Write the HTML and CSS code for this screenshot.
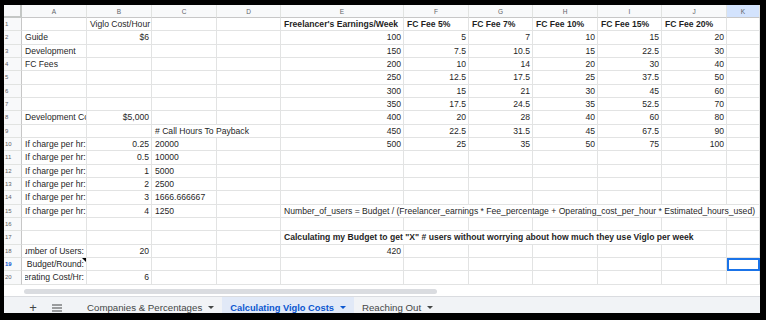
FILE: index.html
```html
<!DOCTYPE html>
<html>
<head>
    <meta charset="utf-8">
    <link rel="stylesheet" href="styles.css">
    <title>Calculating Viglo Costs</title>
</head>
<body>
<div class="frame">
    <table class="grid">
        <colgroup>
            <col style="width:18px">
            <col style="width:65px">
            <col style="width:65px">
            <col style="width:65px">
            <col style="width:64px">
            <col style="width:123px">
            <col style="width:65px">
            <col style="width:64px">
            <col style="width:65px">
            <col style="width:64px">
            <col style="width:65px">
            <col style="width:33px">
        </colgroup>
        <thead>
            <tr>
                <th class="corner"></th>
                <th>A</th><th>B</th><th>C</th><th>D</th><th>E</th><th>F</th>
                <th>G</th><th>H</th><th>I</th><th>J</th><th class="hl">K</th>
            </tr>
        </thead>
        <tbody>
            <tr>
                <th class="rh">1</th>
                <td></td><td>Viglo Cost/Hour</td><td></td><td></td>
                <td class="b">Freelancer's Earnings/Week</td>
                <td class="b">FC Fee 5%</td><td class="b">FC Fee 7%</td><td class="b">FC Fee 10%</td>
                <td class="b">FC Fee 15%</td><td class="b">FC Fee 20%</td><td></td>
            </tr>
            <tr>
                <th class="rh">2</th>
                <td>Guide</td><td class="n">$6</td><td></td><td></td>
                <td class="n">100</td><td class="n">5</td><td class="n">7</td><td class="n">10</td><td class="n">15</td><td class="n">20</td><td></td>
            </tr>
            <tr>
                <th class="rh">3</th>
                <td>Development</td><td></td><td></td><td></td>
                <td class="n">150</td><td class="n">7.5</td><td class="n">10.5</td><td class="n">15</td><td class="n">22.5</td><td class="n">30</td><td></td>
            </tr>
            <tr>
                <th class="rh">4</th>
                <td>FC Fees</td><td></td><td></td><td></td>
                <td class="n">200</td><td class="n">10</td><td class="n">14</td><td class="n">20</td><td class="n">30</td><td class="n">40</td><td></td>
            </tr>
            <tr>
                <th class="rh">5</th>
                <td></td><td></td><td></td><td></td>
                <td class="n">250</td><td class="n">12.5</td><td class="n">17.5</td><td class="n">25</td><td class="n">37.5</td><td class="n">50</td><td></td>
            </tr>
            <tr>
                <th class="rh">6</th>
                <td></td><td></td><td></td><td></td>
                <td class="n">300</td><td class="n">15</td><td class="n">21</td><td class="n">30</td><td class="n">45</td><td class="n">60</td><td></td>
            </tr>
            <tr>
                <th class="rh">7</th>
                <td></td><td></td><td></td><td></td>
                <td class="n">350</td><td class="n">17.5</td><td class="n">24.5</td><td class="n">35</td><td class="n">52.5</td><td class="n">70</td><td></td>
            </tr>
            <tr>
                <th class="rh">8</th>
                <td>Development Cost</td><td class="n">$5,000</td><td></td><td></td>
                <td class="n">400</td><td class="n">20</td><td class="n">28</td><td class="n">40</td><td class="n">60</td><td class="n">80</td><td></td>
            </tr>
            <tr>
                <th class="rh">9</th>
                <td></td><td></td><td colspan="2"># Call Hours To Payback</td>
                <td class="n">450</td><td class="n">22.5</td><td class="n">31.5</td><td class="n">45</td><td class="n">67.5</td><td class="n">90</td><td></td>
            </tr>
            <tr>
                <th class="rh">10</th>
                <td>If charge per hr:</td><td class="n">0.25</td><td>20000</td><td></td>
                <td class="n">500</td><td class="n">25</td><td class="n">35</td><td class="n">50</td><td class="n">75</td><td class="n">100</td><td></td>
            </tr>
            <tr>
                <th class="rh">11</th>
                <td>If charge per hr:</td><td class="n">0.5</td><td>10000</td><td></td>
                <td></td><td></td><td></td><td></td><td></td><td></td><td></td>
            </tr>
            <tr>
                <th class="rh">12</th>
                <td>If charge per hr:</td><td class="n">1</td><td>5000</td><td></td>
                <td></td><td></td><td></td><td></td><td></td><td></td><td></td>
            </tr>
            <tr>
                <th class="rh">13</th>
                <td>If charge per hr:</td><td class="n">2</td><td>2500</td><td></td>
                <td></td><td></td><td></td><td></td><td></td><td></td><td></td>
            </tr>
            <tr>
                <th class="rh">14</th>
                <td>If charge per hr:</td><td class="n">3</td><td>1666.666667</td><td></td>
                <td></td><td></td><td></td><td></td><td></td><td></td><td></td>
            </tr>
            <tr>
                <th class="rh">15</th>
                <td>If charge per hr:</td><td class="n">4</td><td>1250</td><td></td>
                <td colspan="7">Number_of_users = Budget / (Freelancer_earnings * Fee_percentage + Operating_cost_per_hour * Estimated_hours_used)</td>
            </tr>
            <tr>
                <th class="rh">16</th>
                <td></td><td></td><td></td><td></td>
                <td></td><td></td><td></td><td></td><td></td><td></td><td></td>
            </tr>
            <tr>
                <th class="rh">17</th>
                <td></td><td></td><td></td><td></td>
                <td colspan="6" class="b">Calculating my Budget to get "X" # users without worrying about how much they use Viglo per week</td>
                <td></td>
            </tr>
            <tr>
                <th class="rh">18</th>
                <td><div class="clip-r"><span>Number of Users:</span></div></td><td class="n">20</td><td></td><td></td>
                <td class="n">420</td><td></td><td></td><td></td><td></td><td></td><td></td>
            </tr>
            <tr>
                <th class="rh hl">19</th>
                <td class="note"><div class="clip-r"><span>Budget/Round:</span></div></td><td></td><td></td><td></td>
                <td></td><td></td><td></td><td></td><td></td><td></td><td class="active"></td>
            </tr>
            <tr>
                <th class="rh">20</th>
                <td><div class="clip-r"><span>Operating Cost/Hr:</span></div></td><td class="n">6</td><td></td><td></td>
                <td></td><td></td><td></td><td></td><td></td><td></td><td></td>
            </tr>
        </tbody>
    </table>

    <div class="hscroll"><div class="thumb"></div></div>

    <div class="tabs">
        <div class="tools">
            <span class="tool plus">+</span>
            <span class="tool">
                <svg width="10" height="8" viewBox="0 0 10 8">
                    <path d="M0 1h10M0 4h10M0 7h10" stroke="#444746" stroke-width="1.1"/>
                </svg>
            </span>
        </div>
        <div class="tab">Companies &amp; Percentages <i class="caret"></i></div>
        <div class="tab current">Calculating Viglo Costs <i class="caret"></i></div>
        <div class="tab">Reaching Out <i class="caret"></i></div>
    </div>
</div>
</body>
</html>
```

FILE: styles.css
```css
body{
    margin: 0;
    background: #000;
}
.frame{
    margin: 5px 0 0 4px;
    width: 756px;
    height: 308px;
    background: #fff;
    overflow: hidden;
}

/* sheet grid */
.grid{
    table-layout: fixed;
    border-collapse: separate;
    border-spacing: 0;
    width: 756px;
    font-family: "Liberation Sans", Arial, sans-serif;
}
.grid thead th{
    box-sizing: border-box;
    height: 13px;
    padding: 0;
    background: #f8f9fa;
    border-right: 1px solid #e1e3e1;
    border-bottom: 1px solid #c7c7c7;
    font-size: 6.5px;
    font-weight: normal;
    color: #5f6368;
    text-align: center;
}
.grid thead th.corner{
    border-right: 2px solid #c4c7c5;
    border-bottom: 2px solid #c4c7c5;
}
.grid th.hl{
    background: #d3e3fd;
}
.grid th.rh{
    box-sizing: border-box;
    height: 13.33px;
    padding: 0 0 0 1px;
    background: #f8f9fa;
    border-right: 1px solid #c7c7c7;
    border-bottom: 1px solid #e1e3e1;
    font-size: 6px;
    font-weight: normal;
    color: #5f6368;
    text-align: left;
}
.grid th.rh.hl{
    color: #0b57d0;
    font-weight: bold;
}
.grid td{
    box-sizing: border-box;
    height: 13.33px;
    padding: 0 2px 0 3px;
    border-right: 1px solid #e2e3e3;
    border-bottom: 1px solid #e2e3e3;
    font-size: 8.6px;
    line-height: 12px;
    color: #1f1f1f;
    white-space: nowrap;
    overflow: hidden;
}
.grid td.n{
    text-align: right;
}
.grid td.b{
    font-weight: bold;
}
.clip-r{
    display: flex;
    justify-content: flex-end;
    overflow: hidden;
}
.clip-r span{
    flex-shrink: 0;
}
.grid td.note{
    position: relative;
}
.grid td.note::after{
    content: "";
    position: absolute;
    top: 0;
    right: 0;
    border-top: 4px solid #000;
    border-left: 4px solid transparent;
}
.grid td.active{
    outline: 2px solid #1a73e8;
    outline-offset: -2px;
}

/* horizontal scroller */
.hscroll{
    height: 12px;
    padding-top: 4px;
    box-sizing: border-box;
    border-bottom: 1px solid #dadce0;
}
.thumb{
    margin-left: 20px;
    width: 413px;
    height: 5px;
    border-radius: 3px;
    background: #dadce0;
}

/* sheet tabs */
.tabs{
    display: flex;
    height: 18px;
    background: #f1f3f6;
    font-family: "Liberation Sans", Arial, sans-serif;
    font-size: 9.7px;
    color: #444746;
}
.tools{
    display: flex;
    align-items: center;
    gap: 8px;
    width: 75px;
    padding: 4px 0 0 21px;
    box-sizing: border-box;
}
.tool{
    width: 16px;
    display: flex;
    justify-content: center;
    align-items: center;
}
.tool.plus{
    font-size: 13px;
    color: #444746;
}
.tab{
    display: flex;
    align-items: center;
    gap: 6px;
    padding: 4px 8px 0;
}
.tab.current{
    background: #e1e9f7;
    color: #0b57d0;
    font-weight: bold;
    font-size: 9.3px;
}
.caret{
    width: 0;
    height: 0;
    border-top: 3px solid currentColor;
    border-left: 3px solid transparent;
    border-right: 3px solid transparent;
}
```
